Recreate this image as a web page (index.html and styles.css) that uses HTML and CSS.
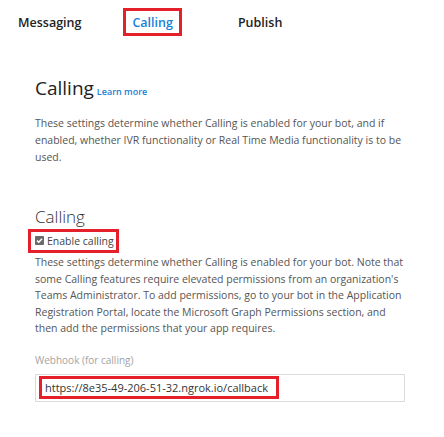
FILE: index.html
```html
<!DOCTYPE html>
<html lang="en">
<head>
<meta charset="utf-8">
<title>Calling</title>
<link rel="stylesheet" href="styles.css">
</head>
<body>
<nav class="tabs">
  <span class="tab">Messaging</span>
  <span class="tab tab-active">Calling</span>
  <span class="tab tab-last">Publish</span>
</nav>
<main class="content">
  <section class="intro">
    <h1 class="title">Calling <a class="learn" href="#">Learn more</a></h1>
    <p class="desc">These settings determine whether Calling is enabled for your bot, and if enabled, whether IVR functionality or Real Time Media functionality is to be used.</p>
  </section>
  <section class="calling">
    <h2 class="subtitle">Calling</h2>
    <label class="check highlight">
      <span class="box"><svg viewBox="0 0 9 9" width="9" height="9"><path d="M2 4.6 L3.8 6.3 L7 2.8" fill="none" stroke="#fff" stroke-width="1.5"/></svg></span>
      <span class="check-text">Enable calling</span>
    </label>
    <p class="desc desc2">These settings determine whether Calling is enabled for your bot. Note that some Calling features require elevated permissions from an organization's Teams Administrator. To add permissions, go to your bot in the Application Registration Portal, locate the Microsoft Graph Permissions section, and then add the permissions that your app requires.</p>
    <div class="field-label">Webhook (for calling)</div>
    <div class="input">
      <span class="input-value highlight">https://8e35-49-206-51-32.ngrok.io/callback</span>
    </div>
  </section>
</main>
</body>
</html>
```

FILE: styles.css
```css
html, body {
  margin: 0;
  padding: 0;
  background: #fff;
}
body {
  font-family: "Open Sans", "Noto Sans", sans-serif;
  color: #333;
  width: 444px;
  height: 437px;
  overflow: hidden;
}
.tabs {
  display: flex;
  align-items: center;
  padding: 8px 0 0 18px;
  height: 27px;
}
.tab {
  font-size: 12.5px;
  font-weight: 600;
  color: #222;
  line-height: 21px;
  padding-top: 1px;
}
.tab-active {
  color: #1a7fd6;
  border: 3px solid #e5202a;
  padding: 1px 6px 0;
  margin-left: 42px;
}
.tab-last {
  margin-left: 56px;
}
.content {
  padding: 0 0 0 35px;
  width: 370px;
}
.title {
  margin: 40px 0 0;
  font-size: 19px;
  font-weight: 400;
  color: #222;
  line-height: 26px;
}
.learn {
  font-size: 9px;
  font-weight: 600;
  color: #1a7fd6;
  text-decoration: none;
  margin-left: -2px;
}
.desc {
  margin: 10px 0 0;
  font-size: 10.5px;
  line-height: 17px;
  color: #555;
}
.subtitle {
  margin: 40px 0 0;
  font-size: 17px;
  font-weight: 300;
  color: #333;
  line-height: 22px;
}
.highlight {
  outline: 3px solid #e5202a;
}
.check {
  display: inline-flex;
  align-items: center;
  gap: 3px;
  margin: 2px 0 0 -4px;
  padding: 2px 2px 2px 4px;
  font-size: 10.5px;
  color: #444;
}
.box {
  display: inline-flex;
  width: 9px;
  height: 9px;
  background: #6a6a6a;
  border-radius: 1px;
}
.desc2 {
  margin-top: 4px;
  line-height: 16.6px;
}
.field-label {
  margin-top: 16px;
  font-size: 10px;
  color: #a3a3a3;
  line-height: 14px;
}
.input {
  margin-top: 7px;
  height: 26px;
  border: 1px solid #dcdcdc;
  display: flex;
  align-items: center;
  padding-left: 6px;
}
.input-value {
  font-size: 11px;
  color: #333;
  padding: 1px 8px 1px 3px;
}
```
